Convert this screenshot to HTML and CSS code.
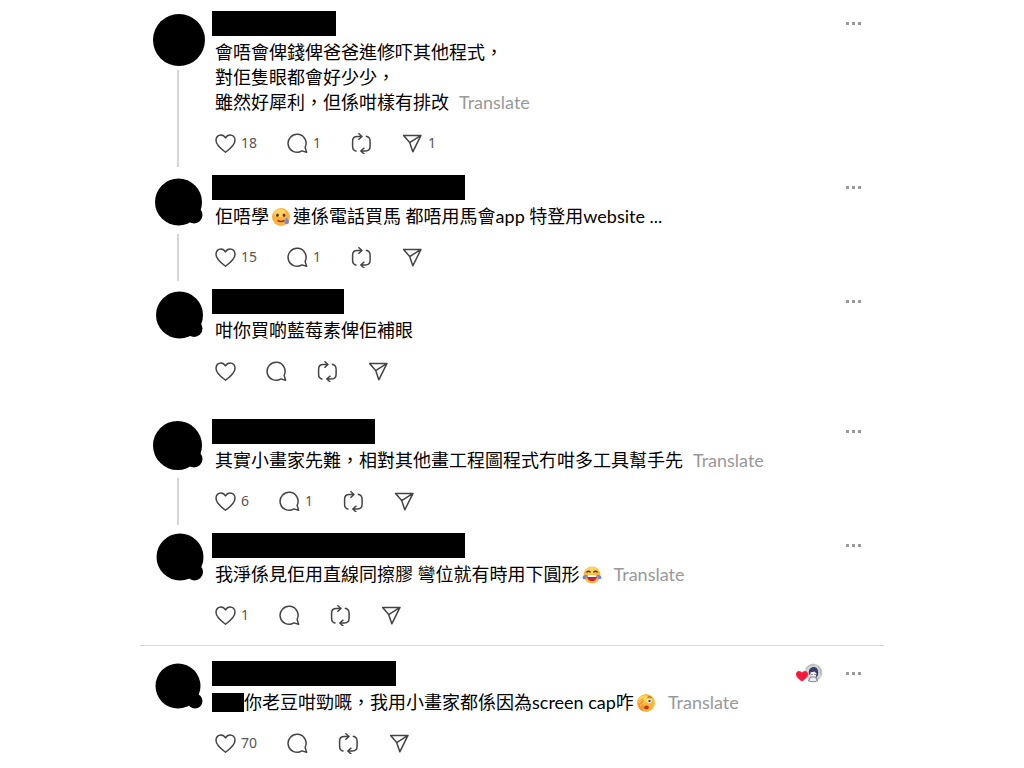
FILE: index.html
```html
<!DOCTYPE html>
<html lang="zh-HK">

<head>
    <meta charset="UTF-8">
    <meta name="viewport" content="width=device-width, initial-scale=1.0">
    <title>Threads</title>
    <link rel="stylesheet" href="styles.css">
</head>

<body>
    <!-- shared icons -->
    <svg class="sprite" aria-hidden="true">
        <symbol id="heart" viewBox="0 0 21 21">
            <path d="M10.5 19.2C7.6 17 1 12.4 1 7.2 1 4.100 3.200 1.900 5.900 1.900c2 0 3.600 1.100 4.600 3 1-1.900 2.600-3 4.600-3C17.800 1.900 20 4.100 20 7.200c0 5.200-6.600 9.800-9.500 12z" />
        </symbol>
        <symbol id="comment" viewBox="0 0 21 21">
            <path d="M18.100 14.400A9 9 0 1 0 14.900 17.900L19.600 19.200z" />
        </symbol>
        <symbol id="repost" viewBox="0 0 21 21">
            <path d="M5.500 18.200C3 17.600 1.600 16 1.600 13.400V8.200c0-3 1.600-4.700 4.600-4.700h4.600M7.400.3l3.600 3.200-3.600 3.300M14.800 3.300c2.800.4 4.300 2.100 4.300 4.800v5.200c0 3-1.600 4.700-4.600 4.700H10M13.400 21.200l-3.600-3.200 3.600-3.300" />
        </symbol>
        <symbol id="send" viewBox="0 0 21 21">
            <path d="M1.600 2.400h17.400L10.800 18.800 7.700 9.600zM7.700 9.600L19 2.400" />
        </symbol>
        <symbol id="dots" viewBox="0 0 15 3">
            <path d="M0 0h3v3H0zM6 0h3v3H6zM12 0h3v3h-3z" />
        </symbol>
    </svg>

    <main class="feed">
        <article class="post">
            <div class="side">
                <svg class="avatar" viewBox="0 0 52 52"><circle cx="26" cy="26" r="26" /></svg>
                <div class="line"></div>
            </div>
            <div class="content">
                <div class="head">
                    <div class="name name-xs"></div>
                    <button class="more" aria-label="More"><svg><use href="#dots" /></svg></button>
                </div>
                <p class="text">會唔會俾錢俾爸爸進修吓其他程式，<br>對佢隻眼都會好少少，<br>雖然好犀利，但係咁樣有排改<a class="translate" href="#">Translate</a></p>
                <div class="actions">
                    <button aria-label="Like"><svg><use href="#heart" /></svg><span>18</span></button>
                    <button aria-label="Reply"><svg><use href="#comment" /></svg><span>1</span></button>
                    <button aria-label="Repost"><svg><use href="#repost" /></svg></button>
                    <button aria-label="Share"><svg><use href="#send" /></svg><span>1</span></button>
                </div>
            </div>
        </article>

        <article class="post">
            <div class="side">
                <svg class="avatar" viewBox="0 0 52 52"><circle cx="25.500" cy="24" r="23.500" /><circle cx="41" cy="37" r="8.500" /></svg>
                <div class="line"></div>
            </div>
            <div class="content">
                <div class="head">
                    <div class="name name-xl"></div>
                    <button class="more" aria-label="More"><svg><use href="#dots" /></svg></button>
                </div>
                <p class="text">佢唔學<svg class="emoji" viewBox="0 0 18 18" role="img" aria-label="🥲">
                        <circle cx="9" cy="9" r="9" fill="#fbb040" />
                        <ellipse cx="8" cy="5" rx="6" ry="4" fill="#ffd45c" />
                        <ellipse cx="5.500" cy="7.200" rx="1.300" ry="1.600" fill="#5b3020" />
                        <ellipse cx="12" cy="7.200" rx="1.300" ry="1.600" fill="#5b3020" />
                        <path d="M5.500 12.500q3.500 2 7 0" fill="none" stroke="#8a3f27" stroke-width="1.500" />
                        <path d="M14.500 9.500c1.800 2 2.500 3.300 2.500 4.500a2.300 2.300 0 0 1-4.600 0c0-1.200.8-2.500 2.100-4.500z" fill="#7d87cf" />
                    </svg>連係電話買馬 都唔用馬會app 特登用website ...</p>
                <div class="actions">
                    <button aria-label="Like"><svg><use href="#heart" /></svg><span>15</span></button>
                    <button aria-label="Reply"><svg><use href="#comment" /></svg><span>1</span></button>
                    <button aria-label="Repost"><svg><use href="#repost" /></svg></button>
                    <button aria-label="Share"><svg><use href="#send" /></svg></button>
                </div>
            </div>
        </article>

        <article class="post post-last">
            <div class="side">
                <svg class="avatar" viewBox="0 0 52 52"><circle cx="26.500" cy="23" r="23.500" /><circle cx="41" cy="36.500" r="8.500" /></svg>
            </div>
            <div class="content">
                <div class="head">
                    <div class="name name-sm"></div>
                    <button class="more" aria-label="More"><svg><use href="#dots" /></svg></button>
                </div>
                <p class="text">咁你買啲藍莓素俾佢補眼</p>
                <div class="actions">
                    <button aria-label="Like"><svg><use href="#heart" /></svg></button>
                    <button aria-label="Reply"><svg><use href="#comment" /></svg></button>
                    <button aria-label="Repost"><svg><use href="#repost" /></svg></button>
                    <button aria-label="Share"><svg><use href="#send" /></svg></button>
                </div>
            </div>
        </article>

        <article class="post">
            <div class="side">
                <svg class="avatar" viewBox="0 0 52 52"><circle cx="24.500" cy="23.500" r="24.500" /><circle cx="41" cy="37" r="8.500" /></svg>
                <div class="line"></div>
            </div>
            <div class="content">
                <div class="head">
                    <div class="name name-md"></div>
                    <button class="more" aria-label="More"><svg><use href="#dots" /></svg></button>
                </div>
                <p class="text">其實小畫家先難，相對其他畫工程圖程式冇咁多工具幫手先<a class="translate" href="#">Translate</a></p>
                <div class="actions">
                    <button aria-label="Like"><svg><use href="#heart" /></svg><span>6</span></button>
                    <button aria-label="Reply"><svg><use href="#comment" /></svg><span>1</span></button>
                    <button aria-label="Repost"><svg><use href="#repost" /></svg></button>
                    <button aria-label="Share"><svg><use href="#send" /></svg></button>
                </div>
            </div>
        </article>

        <article class="post">
            <div class="side">
                <svg class="avatar" viewBox="0 0 52 52"><circle cx="27" cy="21" r="23.500" /><circle cx="41.500" cy="36" r="8.500" /></svg>
            </div>
            <div class="content">
                <div class="head">
                    <div class="name name-xl"></div>
                    <button class="more" aria-label="More"><svg><use href="#dots" /></svg></button>
                </div>
                <p class="text">我淨係見佢用直線同擦膠 彎位就有時用下圓形<svg class="emoji" viewBox="0 0 18 18" role="img" aria-label="😂">
                        <circle cx="9" cy="9" r="8.500" fill="#fbb83c" />
                        <ellipse cx="8.500" cy="4.500" rx="6" ry="3.500" fill="#ffd45c" />
                        <path d="M3.500 6.500q2-2.500 4 0M10.500 6.500q2-2.500 4 0" fill="none" stroke="#5b3020" stroke-width="1.300" />
                        <path d="M3.800 9h10.400c0 4-2.200 6.200-5.200 6.200S3.800 13 3.800 9z" fill="#c4243f" />
                        <path d="M4.500 9h9v2h-9z" fill="#fff" />
                        <path d="M-.5 11.800c0-2 2.300-3 4.300-3 0 2.500-.6 4.500-2.500 4.500-1 0-1.800-.6-1.800-1.500zM18.500 11.800c0-2-2.300-3-4.300-3 0 2.500.6 4.500 2.500 4.500 1 0 1.800-.6 1.800-1.500z" fill="#6f86cf" />
                    </svg><a class="translate" href="#">Translate</a></p>
                <div class="actions">
                    <button aria-label="Like"><svg><use href="#heart" /></svg><span>1</span></button>
                    <button aria-label="Reply"><svg><use href="#comment" /></svg></button>
                    <button aria-label="Repost"><svg><use href="#repost" /></svg></button>
                    <button aria-label="Share"><svg><use href="#send" /></svg></button>
                </div>
            </div>
        </article>

        <hr class="divider">

        <article class="post">
            <div class="side">
                <svg class="avatar" viewBox="0 0 52 52"><circle cx="25" cy="22" r="22.500" /><circle cx="42" cy="37" r="7.500" /></svg>
            </div>
            <div class="content">
                <div class="head">
                    <div class="name name-lg"></div>
                    <svg class="liked" viewBox="0 0 27 20" role="img" aria-label="Liked by author">
                        <circle cx="17.500" cy="9.500" r="9" fill="#d3d5d1" />
                        <path d="M10 6q3-5 9-4M22 3q4 4 3 9M11 14l3-5M23 15l-3 2" fill="none" stroke="#a9ada8" stroke-width="1" />
                        <path d="M13 11c-1-5 2-7 5-7s5 3 4 8l-2 3-1-5-4-1-1 3z" fill="#383c67" />
                        <path d="M14.500 9.500l4-1 2 2-1 4h-4z" fill="#f3eeee" />
                        <path d="M12.500 18l2-4h5l2 4q-4 1.500-9 0z" fill="#eef0f0" stroke="#62657b" stroke-width=".8" />
                        <path d="M16 11v1M19 11v1" stroke="#39406a" />
                        <path d="M6 18.500C3 16.300 0 14 0 11.200 0 9.400 1.300 8 3 8c1.300 0 2.400.7 3 1.800C6.600 8.700 7.700 8 9 8c1.700 0 3 1.400 3 3.200 0 2.800-3 5.100-6 7.300z" fill="#f9193d" />
                    </svg>
                    <button class="more" aria-label="More"><svg><use href="#dots" /></svg></button>
                </div>
                <p class="text"><span class="mention"></span>你老豆咁勁嘅，我用小畫家都係因為screen cap咋<svg class="emoji" viewBox="0 0 18 18" role="img" aria-label="🫣">
                        <circle cx="9" cy="9" r="9" fill="#fbb83c" />
                        <ellipse cx="7" cy="5" rx="5" ry="3.500" fill="#ffd45c" />
                        <path d="M1 9q2-2 4-5l2 2-1 4 2 4-3 3Q1 14 1 9z" fill="#f09a30" />
                        <path d="M2 9l4-4M3 12l4-4" stroke="#ffd45c" stroke-width="1" />
                        <circle cx="12.500" cy="7" r="2.300" fill="#fff" />
                        <circle cx="12.500" cy="7" r="1.200" fill="#5b3020" />
                        <path d="M10.500 3.500q2-1.500 4 0" fill="none" stroke="#96501f" />
                        <ellipse cx="9.500" cy="13.500" rx="2.300" ry="2" fill="#c43038" />
                    </svg><a class="translate" href="#">Translate</a></p>
                <div class="actions">
                    <button aria-label="Like"><svg><use href="#heart" /></svg><span>70</span></button>
                    <button aria-label="Reply"><svg><use href="#comment" /></svg></button>
                    <button aria-label="Repost"><svg><use href="#repost" /></svg></button>
                    <button aria-label="Share"><svg><use href="#send" /></svg></button>
                </div>
            </div>
        </article>
    </main>
</body>

</html>
```
FILE: styles.css
```css
* {
    margin: 0;
    padding: 0;
    box-sizing: border-box;
}

body {
    background: #fff;
    color: #000;
    font-family: "Noto Sans", "Noto Sans CJK TC", sans-serif;
}

button {
    border: 0;
    background: none;
    color: inherit;
    font: inherit;
    cursor: pointer;
}

.sprite {
    display: none;
}

.feed {
    max-width: 744px;
    margin: 0 auto;
}

.post {
    display: flex;
    gap: 10px;
    padding: 0 23px 0 13px;
}

.post-last {
    margin-bottom: 16px;
}

/* avatar and thread line */
.side {
    display: flex;
    flex-direction: column;
    width: 52px;
    padding-top: 14px;
}

.avatar {
    display: block;
    width: 52px;
    height: 52px;
    overflow: visible;
}

.line {
    flex: 1;
    width: 2px;
    margin: 4px 0 -3px 24px;
    background: #d6d6d6;
}

.content {
    flex: 1;
    min-width: 0;
    padding-bottom: 11px;
}

.head {
    display: flex;
    align-items: center;
    height: 40px;
    padding-top: 6px;
}

.name {
    height: 25px;
    margin-left: -3px;
    background: #000;
}

.name-xs {
    width: 124px;
}

.name-sm {
    width: 132px;
}

.name-md {
    width: 163px;
}

.name-lg {
    width: 184px;
}

.name-xl {
    width: 253px;
}

.liked {
    width: 27px;
    height: 20px;
    margin: 0 23px 0 auto;
    overflow: visible;
}

.more {
    display: flex;
    align-items: center;
    height: 20px;
    margin-left: auto;
}

.liked + .more {
    margin-left: 0;
}

.more svg {
    width: 15px;
    height: 3px;
    fill: #999;
}

.text {
    font-family: Lato, "Noto Sans CJK TC", sans-serif;
    font-size: 18px;
    line-height: 25px;
}

.emoji {
    width: 18px;
    height: 18px;
    margin: 0 3px;
    overflow: visible;
    vertical-align: -3px;
}

.mention {
    display: inline-block;
    width: 32px;
    height: 19px;
    margin-left: -3px;
    background: #000;
    vertical-align: -3px;
}

.translate {
    margin-left: 10px;
    color: #999;
    text-decoration: none;
}

.actions {
    display: flex;
    gap: 30px;
    margin-top: 18px;
}

.actions button {
    display: flex;
    align-items: center;
    gap: 5px;
    height: 20px;
    color: #555;
    font-size: 14px;
    line-height: 20px;
}

.actions svg {
    width: 21px;
    height: 21px;
    overflow: visible;
    fill: none;
    stroke: #444;
    stroke-width: 1.5;
    stroke-linejoin: round;
}

.divider {
    height: 1px;
    margin: 9px 0 4px;
    border: 0;
    background: #d6d6d6;
}
```
